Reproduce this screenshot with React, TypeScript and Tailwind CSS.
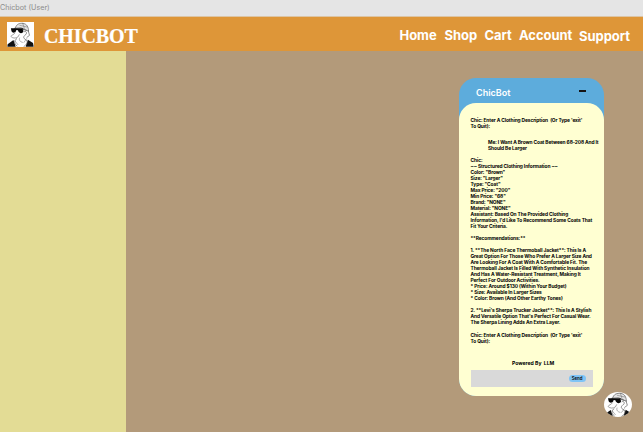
import React from "react";

function Duck({ className }: { className: string }) {
  return (
    <svg viewBox="0 0 84 75" preserveAspectRatio="none" className={className} fill="none" stroke="#555" strokeWidth="2" strokeLinejoin="round" strokeLinecap="round">
      <rect width="84" height="75" fill="#fff" stroke="none" />
      <path d="M1 74 L2 67 L20 54 L27 74 Z M83 74 L81 63 L65 53 L58 74 Z" fill="#111" stroke="none" />
      <path d="M26 18 C29 6 39 3 50 4 C62 6 67 15 67 28 L57 23 L43 17 L24 19 Z" fill="#e4e4e4" />
      <path d="M40 10 L62 15 M49 4 L54 19" strokeWidth="1.3" />
      <path d="M66 26 L70 40 L62 46 M54 29 C61 25 64 36 57 39" />
      <path d="M25 33 C22 38 14 39 12 43 C16 49 27 50 34 45 L38 38" strokeWidth="1.6" fill="#fff" />
      <path d="M54 41 C49 47 53 50 60 54 C67 61 60 69 53 73 M30 50 C22 55 21 65 31 72" />
      <path d="M39 48 C36 55 42 60 48 61 M25 57 L34 68 M61 50 L53 61" strokeWidth="1.4" />
      <path d="M12 19 L50 19 L51 30 C46 36 36 34 34 25 L29 24 C28 33 17 35 14 28 Z" fill="#080808" stroke="none" />
      <path d="M49 22 L60 25" strokeWidth="2.5" />
    </svg>
  );
}

const links = [
  { label: "Home", box: "w-[45px]" },
  { label: "Shop", box: "w-10" },
  { label: "Cart", box: "w-[34.5px]" },
  { label: "Account", box: "w-[60px]" },
  { label: "Support", box: "w-[64px] pt-px" },
];

const reply = [
  "Chic:",
  "~~ Structured Clothing Information ~~",
  'Color: "Brown"',
  'Size: "Larger"',
  'Type: "Coat"',
  'Max Price: "200"',
  'Min Price: "68"',
  'Brand: "NONE"',
  'Material: "NONE"',
  "Assistant: Based On The Provided Clothing",
  "Information, I'd Like To Recommend Some Coats That",
  "Fit Your Criteria.",
  "",
  "**Recommendations:**",
  "",
  "1. **The North Face Thermoball Jacket**: This Is A",
  "Great Option For Those Who Prefer A Larger Size And",
  "Are Looking For A Coat With A Comfortable Fit. The",
  "Thermoball Jacket Is Filled With Synthetic Insulation",
  "And Has A Water-Resistant Treatment, Making It",
  "Perfect For Outdoor Activities.",
  "* Price: Around $130 (Within Your Budget)",
  "* Size: Available In Larger Sizes",
  "* Color: Brown (And Other Earthy Tones)",
  "",
  "2. **Levi's Sherpa Trucker Jacket**: This Is A Stylish",
  "And Versatile Option That's Perfect For Casual Wear.",
  "The Sherpa Lining Adds An Extra Layer.",
];

const prompt = ["Chic: Enter A Clothing Description  (Or Type 'exit'", "To Quit):"];

function Message({ lines, className = "" }: { lines: string[]; className?: string }) {
  return (
    <div className={`whitespace-pre text-[4.85px] leading-[6px] font-bold tracking-[-0.09px] text-black ${className}`}>
      {lines.map((line, i) => (
        <div key={i} className="h-[6px]">{line}</div>
      ))}
    </div>
  );
}

export default function App() {
  return (
    <div className="relative flex h-[432px] w-[643px] flex-col overflow-hidden bg-[#b39a7a] font-['Inter',sans-serif]">
      <div className="h-4 shrink-0 bg-[#e5e5e5] text-[7.2px] leading-[15px] text-[#8c8c8c]">Chicbot (User)</div>
      <header className="flex h-[35px] shrink-0 items-center border-t border-[#dcc5a5] bg-[#de9638] pl-[7px]">
        <Duck className="h-[25px] w-[27px]" />
        <h1 className="ml-[10px] pt-[3px] font-['Liberation_Serif',serif] text-[20px] leading-none font-bold tracking-[-0.1px] text-white [-webkit-text-stroke:0.2px_white]">CHICBOT</h1>
        <nav className="ml-auto flex pt-[2px] text-[13px] leading-4 font-bold tracking-[-0.05px] text-white">
          {links.map((l) => (
            <a key={l.label} className={`shrink-0 whitespace-nowrap ${l.box}`}>{l.label}</a>
          ))}
        </nav>
      </header>
      <div className="flex flex-1">
        <aside className="w-[126px] bg-[#e3dc95]" />
        <main className="flex flex-1 justify-end pt-[27px] pr-[39px]">
          <section className="h-[318px] w-[145px] rounded-[17px] bg-[#5dacdc]">
            <div className="flex h-[25px] items-center justify-between pt-[3px] pr-[18.5px] pl-[17px]">
              <h2 className="text-[9px] leading-none font-semibold text-white">ChicBot</h2>
              <span className="mb-[3px] h-[2px] w-[7px] bg-[#151515]" />
            </div>
            <div className="flex h-[293px] flex-col rounded-[17px] bg-[#ffffd2] pt-[14px] pr-[11px] pl-[11.5px]">
              <Message lines={prompt} />
              <Message className="mt-[10px] ml-[17.5px]" lines={["Me: I Want A Brown Coat Between 68-208 And It", "Should Be Larger"]} />
              <Message className="mt-[6px]" lines={reply} />
              <Message className="mt-[7px]" lines={prompt} />
              <div className="mt-[16px] ml-[41.5px] h-[6px] text-[5.1px] leading-[6px] font-bold whitespace-pre text-black">Powered By  LLM</div>
              <div className="mt-[4px] flex h-[17px] w-[122px] items-center justify-end bg-[#d9d9d9] pr-[7px]">
                <button className="h-[7px] w-[17px] rounded-full bg-[#80c4f5] text-center text-[4.3px] leading-[7px] font-semibold text-black">Send</button>
              </div>
            </div>
          </section>
        </main>
      </div>
      <div className="absolute top-[392px] left-[604px] h-[25px] w-7 overflow-hidden rounded-[50%]">
        <Duck className="h-full w-full" />
      </div>
    </div>
  );
}
